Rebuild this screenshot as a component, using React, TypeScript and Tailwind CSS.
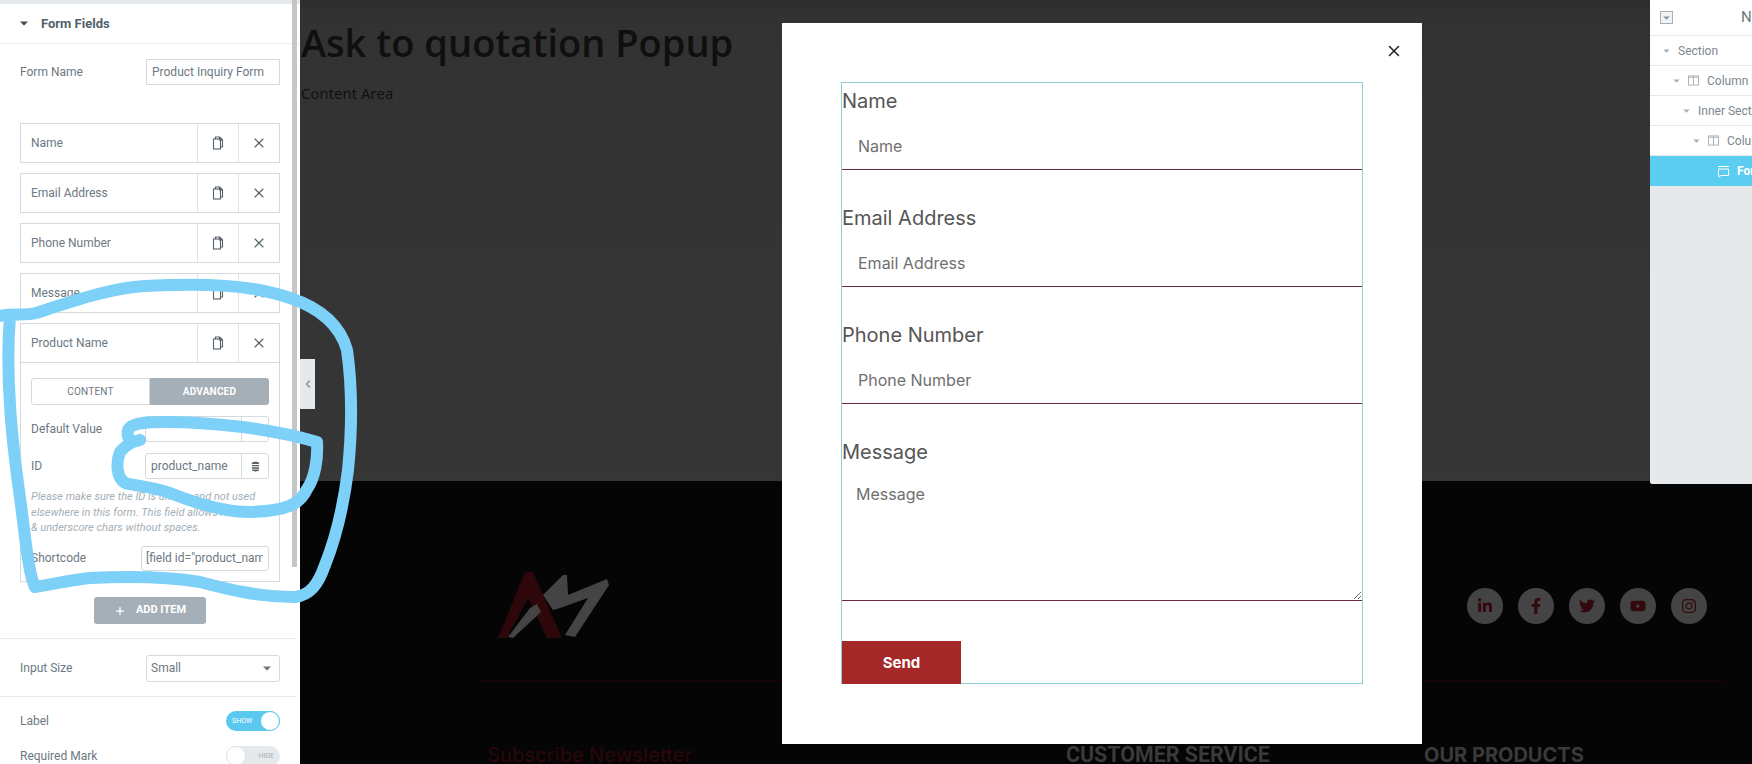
import React from 'react';
import { X, Plus, ChevronLeft } from 'lucide-react';
import { FaLinkedinIn, FaFacebookF, FaTwitter, FaYoutube, FaInstagram } from 'react-icons/fa';

const Caret = ({ className }: { className: string }) => (
    <svg viewBox="0 0 8 5" className={`shrink-0 ${className}`} fill="currentColor">
        <path d="M0 0.5h8L4 4.8z" />
    </svg>
);

const CopyIcon = () => (
    <svg viewBox="0 0 12 14" className="w-[12px] h-[14px] text-[#556068]" fill="none" stroke="currentColor" strokeWidth="1.1">
        <path d="M3.5 3V1h4.2L10.5 3.8V11H8.5" />
        <path d="M7.5 1v3h3" />
        <rect x="1.5" y="3" width="7" height="10" />
    </svg>
);

const ColumnIcon = () => (
    <svg viewBox="0 0 12 12" className="w-[11px] h-[11px] text-[#a4afb7] shrink-0" fill="none" stroke="currentColor" strokeWidth="1">
        <rect x="0.5" y="1" width="11" height="10" />
        <path d="M6 1v10M0.5 2.5h11" />
    </svg>
);

const StackIcon = () => (
    <svg viewBox="0 0 10 12" className="w-[9px] h-[11px] text-[#556068]" fill="currentColor">
        <path d="M1 2.2C1 1.2 3 .6 5 .6s4 .6 4 1.6v1H1z" />
        <path d="M1 4.2h8v1.6H1zM1 6.8h8v1.6H1zM1 9.4h8v.6c0 1-2 1.6-4 1.6s-4-.6-4-1.6z" />
    </svg>
);

const RepeaterHead = ({ label, expanded }: { label: string; expanded?: boolean }) => (
    <div className={`flex h-[40px] border border-[#d5dadf] ${expanded ? '' : 'mb-[10px]'}`}>
        <div className="flex-1 flex items-center pl-[10px] text-[12px] text-[#6d7882]">{label}</div>
        <div className="w-[41px] flex items-center justify-center border-l border-[#e0e3e6]"><CopyIcon /></div>
        <div className="w-[41px] flex items-center justify-center border-l border-[#e0e3e6]">
            <X size={16} strokeWidth={1.7} className="text-[#556068]" />
        </div>
    </div>
);

const Sidebar = () => (
    <aside className="w-[300px] shrink-0 bg-white font-['Roboto',sans-serif] overflow-hidden relative">
        <div className="h-[4px] bg-[#e6e9ec]" />
        <div className="h-[40px] flex items-center pl-[20px] border-b border-[#eceef0]">
            <Caret className="w-[8px] h-[5px] text-[#495157] mr-[13px]" />
            <span className="text-[13px] font-bold text-[#556068]">Form Fields</span>
        </div>
        <div className="w-[292px] pl-[20px] pr-[12px]">
            <div className="flex items-center justify-between mt-[15px] mb-[38px]">
                <span className="text-[12px] text-[#6d7882]">Form Name</span>
                <div className="w-[134px] h-[26px] border border-[#d5dadf] flex items-center pl-[5px] text-[12px] text-[#6d7882]">Product Inquiry Form</div>
            </div>
            <RepeaterHead label="Name" />
            <RepeaterHead label="Email Address" />
            <RepeaterHead label="Phone Number" />
            <RepeaterHead label="Message" />
            <RepeaterHead label="Product Name" expanded />
            <div className="border border-t-0 border-[#d5dadf] h-[219px] px-[10px] pt-[15px]">
                <div className="flex h-[27px] text-[10px] uppercase tracking-[0.2px]">
                    <div className="flex-1 flex items-center justify-center border border-[#d5dadf] rounded-l-[3px] text-[#6d7882]">Content</div>
                    <div className="w-[119px] flex items-center justify-center bg-[#a4afb7] rounded-r-[3px] text-white font-bold">Advanced</div>
                </div>
                <div className="flex items-center justify-between mt-[11px] h-[26px]">
                    <span className="text-[12px] text-[#6d7882]">Default Value</span>
                    <div className="w-[124px] h-[26px] border border-[#d5dadf] rounded-[3px] flex">
                        <div className="flex-1" />
                        <div className="w-[27px] border-l border-[#d5dadf]" />
                    </div>
                </div>
                <div className="flex items-center justify-between mt-[11px] h-[26px]">
                    <span className="text-[12px] text-[#6d7882]">ID</span>
                    <div className="w-[124px] h-[26px] border border-[#d5dadf] rounded-[3px] flex text-[12px] text-[#6d7882]">
                        <div className="flex-1 flex items-center pl-[5px]">product_name</div>
                        <div className="w-[27px] border-l border-[#d5dadf] flex items-center justify-center">
                            <StackIcon />
                        </div>
                    </div>
                </div>
                <p className="mt-[10px] text-[11px] leading-[15.5px] italic text-[#a4afb7] whitespace-nowrap">
                    Please make sure the ID is unique and not used<br />
                    elsewhere in this form. This field allows A-z 0-9<br />
                    &amp; underscore chars without spaces.
                </p>
                <div className="flex items-center justify-between mt-[10px] h-[25px]">
                    <span className="text-[12px] text-[#6d7882]">Shortcode</span>
                    <div className="w-[128px] h-[25px] border border-[#d5dadf] rounded-[3px] flex items-center pl-[4px] pr-[5px] text-[12px] text-[#6d7882] overflow-hidden whitespace-nowrap">
                        <span className="overflow-hidden">[field id="product_name"]</span>
                    </div>
                </div>
            </div>
            <div className="flex justify-center mt-[15px]">
                <div className="w-[112px] h-[27px] bg-[#a4afb7] rounded-[3px] flex items-center justify-center gap-[10px] text-white text-[11px] font-bold uppercase">
                    <Plus size={12} strokeWidth={2.5} />
                    <span>Add Item</span>
                </div>
            </div>
        </div>
        <div className="w-[296px] border-b border-[#e6e9ec] h-[15px]" />
        <div className="w-[292px] pl-[20px] pr-[12px] h-[57px] pt-[1px] flex items-center justify-between">
            <span className="text-[12px] text-[#6d7882]">Input Size</span>
            <div className="w-[134px] h-[27px] border border-[#d5dadf] rounded-[3px] flex items-center justify-between pl-[4px] pr-[8px] text-[12px] text-[#6d7882]">
                <span>Small</span>
                <Caret className="w-[8px] h-[5px] text-[#6d7882]" />
            </div>
        </div>
        <div className="w-[296px] border-t border-[#e6e9ec]" />
        <div className="w-[292px] pl-[20px] pr-[12px] mt-[14px] flex items-center justify-between h-[20px]">
            <span className="text-[12px] text-[#6d7882]">Label</span>
            <div className="w-[54px] h-[20px] rounded-full bg-[#5bc8f0] flex items-center justify-between pl-[6px]">
                <span className="text-[7px] text-white uppercase">Show</span>
                <div className="w-[20px] h-[20px] rounded-full bg-white border border-[#5bc8f0]" />
            </div>
        </div>
        <div className="w-[292px] pl-[20px] pr-[12px] mt-[15px] flex items-center justify-between h-[20px]">
            <span className="text-[12px] text-[#6d7882]">Required Mark</span>
            <div className="w-[54px] h-[20px] rounded-full bg-[#e6e9ec] flex items-center justify-between pr-[6px]">
                <div className="w-[20px] h-[20px] rounded-full bg-white border border-[#e0e3e6]" />
                <span className="text-[7px] text-[#a4afb7] uppercase">Hide</span>
            </div>
        </div>
        <div className="absolute left-[292px] top-0 w-[5px] h-[567px] bg-[#c4c6c8]" />
    </aside>
);

const PopupField = ({ label }: { label: string }) => (
    <div className="mb-[30px]">
        <div className="h-[36px] flex items-center text-[20px] text-[#555]">{label}</div>
        <input
            placeholder={label}
            readOnly
            className="mt-[4px] w-full h-[47px] pl-[16px] text-[16px] outline-none border-b border-[#6b2a35] placeholder:text-[#6f6f6f]"
        />
    </div>
);

const Popup = () => (
    <div className="absolute left-[482px] top-[23px] w-[640px] h-[721px] bg-white pl-[59px] pt-[59px] font-['Inter',sans-serif]">
        <button className="absolute right-[19px] top-[19px] text-[#222]">
            <X size={18} strokeWidth={2} />
        </button>
        <div className="w-[522px] h-[602px] border border-[#8fd0d6]">
            <PopupField label="Name" />
            <PopupField label="Email Address" />
            <PopupField label="Phone Number" />
            <div className="h-[36px] flex items-center text-[20px] text-[#555]">Message</div>
            <textarea
                placeholder="Message"
                readOnly
                className="block mt-[4px] w-full h-[127px] pl-[14px] pt-[8px] text-[16px] outline-none border-b border-[#6b2a35] placeholder:text-[#6f6f6f]"
            />
            <button className="mt-[40px] w-[119px] h-[43px] pt-[2px] bg-[#a52829] text-white text-[15px] font-bold">Send</button>
        </div>
    </div>
);

const Navigator = () => {
    const row = 'h-[30px] flex items-center border-b border-[#e6e9ec] text-[12px] text-[#7d8790] whitespace-nowrap';
    return (
        <div className="absolute left-[1350px] top-0 w-[102px] h-[484px] bg-white rounded-bl-[3px] overflow-hidden font-['Roboto',sans-serif]">
            <div className="h-[36px] flex items-center border-b border-[#e6e9ec] pl-[10px] text-[15px] text-[#6d7882] whitespace-nowrap">
                <div className="w-[13px] h-[13px] border border-[#a4afb7] bg-[#f1f3f5] flex items-center justify-center mr-[68px] shrink-0">
                    <Caret className="w-[7px] h-[4px] text-[#8a949c]" />
                </div>
                <span>Navigator</span>
            </div>
            <div className={`${row} pl-[13px]`}>
                <Caret className="w-[7px] h-[4px] text-[#a4afb7] mr-[8px]" />Section
            </div>
            <div className={`${row} pl-[23px]`}>
                <Caret className="w-[7px] h-[4px] text-[#a4afb7] mr-[8px]" /><ColumnIcon /><span className="ml-[8px]">Column</span>
            </div>
            <div className={`${row} pl-[33px]`}>
                <Caret className="w-[7px] h-[4px] text-[#a4afb7] mr-[8px]" />Inner Section
            </div>
            <div className={`${row} pl-[43px]`}>
                <Caret className="w-[7px] h-[4px] text-[#a4afb7] mr-[8px]" /><ColumnIcon /><span className="ml-[8px]">Column</span>
            </div>
            <div className="h-[30px] flex items-center bg-[#5bcdf0] pl-[67px] text-[12px] font-bold text-white whitespace-nowrap">
                <svg viewBox="0 0 13 13" className="w-[13px] h-[13px] mr-[7px] shrink-0" fill="none" stroke="currentColor" strokeWidth="1">
                    <path d="M1 1.5h11M1.5 4h10v6.5H4L2 12V10.5h-.5z" />
                </svg>
                Form
            </div>
            <div className="h-[314px] bg-[#e6e9ec]" />
        </div>
    );
};

const socials = [FaLinkedinIn, FaFacebookF, FaTwitter, FaYoutube, FaInstagram];

const Footer = () => (
    <footer className="h-[283px] bg-[#050505] overflow-hidden font-['Inter',sans-serif]">
        <div className="flex justify-between items-center pl-[197px] pr-[45px] pt-[91px]">
            <svg viewBox="0 0 114 68" className="w-[114px] h-[68px]">
                <path d="M1 66 28 0h8l29 66H50L31 26 10 66z" fill="#2e070b" />
                <path d="M11 65 33 36l7-4 4 8-28 26zM46 23 66 3h4l1 20 39-16 2 6-34 52-10-2 23-37-28 10-7 2z" fill="#444" />
            </svg>
            <div className="flex gap-[15px]">
                {socials.map((Icon, i) => (
                    <div key={i} className="w-[36px] h-[36px] rounded-full bg-[#444] flex items-center justify-center text-[#33090d]">
                        <Icon size={16} />
                    </div>
                ))}
            </div>
        </div>
        <div className="mt-[40px] ml-[180px] mr-[27px] border-t border-[#180407]" />
        <div className="grid grid-cols-[579px_358px_1fr] pl-[187px] mt-[58px] items-center h-[28px]">
            <span className="text-[20px] font-medium text-[#280709] whitespace-nowrap">Subscribe Newsletter</span>
            <span className="font-['Roboto',sans-serif] text-[21.4px] font-bold text-[#3a3a3a] whitespace-nowrap">CUSTOMER SERVICE</span>
            <span className="text-[20px] font-bold text-[#3a3a3a] whitespace-nowrap">OUR PRODUCTS</span>
        </div>
    </footer>
);

export default function App() {
    return (
        <div className="relative flex w-[1752px] h-[764px] overflow-hidden">
            <Sidebar />
            <main className="relative flex-1 flex flex-col">
                <div className="h-[481px] bg-linear-to-b from-[#323232] to-[#363636] text-[#0f0f0f] font-['Open_Sans',sans-serif]">
                    <div className="h-[8px] bg-[#2e2e2e]" />
                    <h1 className="pl-[1px] pt-[7px] text-[38px] leading-[54px] font-semibold">Ask to quotation Popup</h1>
                    <p className="pl-[1px] mt-[12px] text-[15px] leading-[24px]">Content Area</p>
                </div>
                <Footer />
                <Popup />
                <Navigator />
                <div className="absolute left-0 top-[359px] w-[15px] h-[50px] bg-[#e6e9ec] flex items-center justify-center">
                    <ChevronLeft size={12} strokeWidth={3} className="text-[#8a949c]" />
                </div>
            </main>
            {/* hand drawn marker over the screenshot */}
            <svg className="absolute left-0 top-0 pointer-events-none" width="400" height="764" viewBox="0 0 400 764" fill="none" stroke="#7dd0f8" strokeWidth="12" strokeLinecap="round" strokeLinejoin="round">
                <path d="M0 316 C12 313 25 316 36 313 C70 302 110 288 145 286 C200 283 250 284 290 298 C320 308 340 325 347 350 C352 385 352 430 348 470 C343 510 335 540 325 565 C318 585 310 595 295 597 C260 597 230 590 200 582 C170 577 130 576 90 578 C70 580 50 585 35 587 C29 575 26 545 21 505 C16 470 12 440 10 405 C8 375 8 340 10 316" />
                <path d="M140 440 C132 443 126 440 128 430 C132 422 150 422 165 422 C210 422 270 428 317 442 C318 458 315 478 307 489 C300 505 285 511 250 512 C225 512 200 505 170 493 C150 486 135 486 125 483 C116 477 116 462 120 452 C125 446 133 441 140 440" />
            </svg>
        </div>
    );
}
